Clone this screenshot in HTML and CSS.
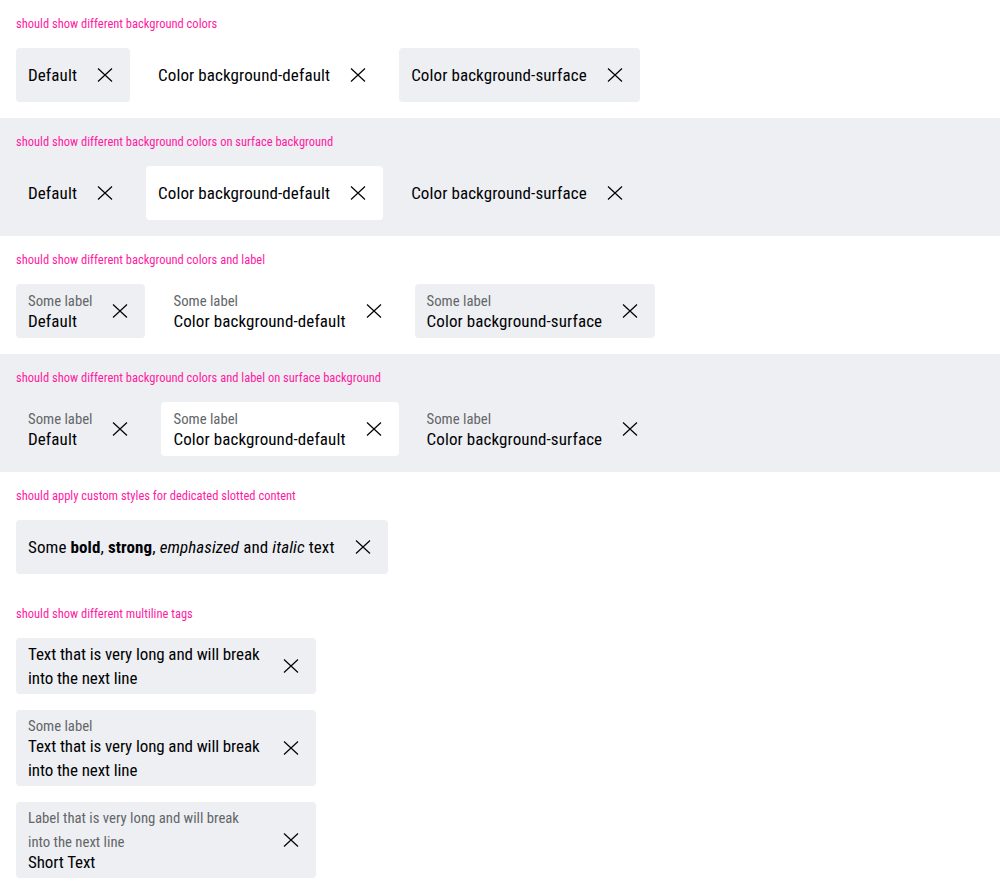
FILE: index.html
```html
<!DOCTYPE html>
<html lang="en">
<head>
<meta charset="utf-8">
<title>Tag dismissible</title>
<link rel="stylesheet" href="styles.css">
</head>
<body>
<svg width="0" height="0" class="defs" aria-hidden="true">
  <symbol id="x" viewBox="0 0 24 24"><path d="M5 5.5 L19 18.5 M19 5.5 L5 18.5" fill="none" stroke="currentColor" stroke-width="1.2"/></symbol>
</svg>

<section class="section">
  <p class="title">should show different background colors</p>
  <div class="row">
    <button class="tag tag-surface"><span class="content"><span class="text">Default</span></span><svg class="icon"><use href="#x"/></svg></button>
    <button class="tag tag-default"><span class="content"><span class="text">Color background-default</span></span><svg class="icon"><use href="#x"/></svg></button>
    <button class="tag tag-surface"><span class="content"><span class="text">Color background-surface</span></span><svg class="icon"><use href="#x"/></svg></button>
  </div>
</section>

<section class="section section-surface">
  <p class="title">should show different background colors on surface background</p>
  <div class="row">
    <button class="tag tag-surface"><span class="content"><span class="text">Default</span></span><svg class="icon"><use href="#x"/></svg></button>
    <button class="tag tag-default"><span class="content"><span class="text">Color background-default</span></span><svg class="icon"><use href="#x"/></svg></button>
    <button class="tag tag-surface"><span class="content"><span class="text">Color background-surface</span></span><svg class="icon"><use href="#x"/></svg></button>
  </div>
</section>

<section class="section">
  <p class="title">should show different background colors and label</p>
  <div class="row">
    <button class="tag tag-surface"><span class="content"><span class="label">Some label</span><span class="text">Default</span></span><svg class="icon"><use href="#x"/></svg></button>
    <button class="tag tag-default"><span class="content"><span class="label">Some label</span><span class="text">Color background-default</span></span><svg class="icon"><use href="#x"/></svg></button>
    <button class="tag tag-surface"><span class="content"><span class="label">Some label</span><span class="text">Color background-surface</span></span><svg class="icon"><use href="#x"/></svg></button>
  </div>
</section>

<section class="section section-surface">
  <p class="title">should show different background colors and label on surface background</p>
  <div class="row">
    <button class="tag tag-surface"><span class="content"><span class="label">Some label</span><span class="text">Default</span></span><svg class="icon"><use href="#x"/></svg></button>
    <button class="tag tag-default"><span class="content"><span class="label">Some label</span><span class="text">Color background-default</span></span><svg class="icon"><use href="#x"/></svg></button>
    <button class="tag tag-surface"><span class="content"><span class="label">Some label</span><span class="text">Color background-surface</span></span><svg class="icon"><use href="#x"/></svg></button>
  </div>
</section>

<section class="section">
  <p class="title">should apply custom styles for dedicated slotted content</p>
  <div class="row">
    <button class="tag tag-surface"><span class="content"><span class="text">Some <b>bold</b>, <strong>strong</strong>, <em>emphasized</em> and <i>italic</i> text</span></span><svg class="icon"><use href="#x"/></svg></button>
  </div>
</section>

<section class="section">
  <p class="title">should show different multiline tags</p>
  <div class="column">
    <button class="tag tag-surface tag-fixed"><span class="content"><span class="text">Text that is very long and will break into the next line</span></span><svg class="icon"><use href="#x"/></svg></button>
    <button class="tag tag-surface tag-fixed"><span class="content"><span class="label">Some label</span><span class="text">Text that is very long and will break into the next line</span></span><svg class="icon"><use href="#x"/></svg></button>
    <button class="tag tag-surface tag-fixed"><span class="content"><span class="label">Label that is very long and will break into the next line</span><span class="text">Short Text</span></span><svg class="icon"><use href="#x"/></svg></button>
  </div>
</section>
</body>
</html>
```
FILE: styles.css
```css
* { box-sizing: border-box; }

html, body {
  margin: 0;
  padding: 0;
  background: #ffffff;
}

body {
  font-family: "Roboto Condensed", "Roboto", "Liberation Sans", sans-serif;
  color: #010205;
}

.defs {
  position: absolute;
  width: 0;
  height: 0;
  overflow: hidden;
}

.section {
  padding: 16px;
  background: #ffffff;
}

.section-surface {
  background: #eeeff2;
}

.title {
  margin: 0 0 16px;
  font-size: 12.5px;
  line-height: 16px;
  color: #ff1aa3;
}

.row {
  display: flex;
  flex-wrap: wrap;
  align-items: flex-start;
  gap: 16px;
}

.column {
  display: flex;
  flex-direction: column;
  align-items: flex-start;
  gap: 16px;
}

.tag {
  display: inline-flex;
  align-items: center;
  gap: 16px;
  min-height: 54px;
  margin: 0;
  padding: 4px 13px 4px 12px;
  border: 0;
  border-radius: 4px;
  font: inherit;
  color: #010205;
  text-align: left;
  cursor: pointer;
}

.tag-surface { background: #eeeff2; }
.tag-default { background: #ffffff; }

.tag-fixed {
  width: 300px;
}

.content {
  display: flex;
  flex-direction: column;
  flex: 1 1 auto;
  min-width: 0;
}

.label {
  font-size: 14.75px;
  line-height: 24px;
  margin-bottom: -4px;
  color: #626669;
}

.text {
  font-size: 17px;
  line-height: 24px;
  letter-spacing: 0.1px;
}

.tag-fixed .text {
  letter-spacing: -0.1px;
}

.text b,
.text strong {
  font-weight: 700;
}

.text em,
.text i {
  font-style: italic;
}

.icon {
  flex: 0 0 24px;
  width: 24px;
  height: 24px;
  color: #010205;
}
```
